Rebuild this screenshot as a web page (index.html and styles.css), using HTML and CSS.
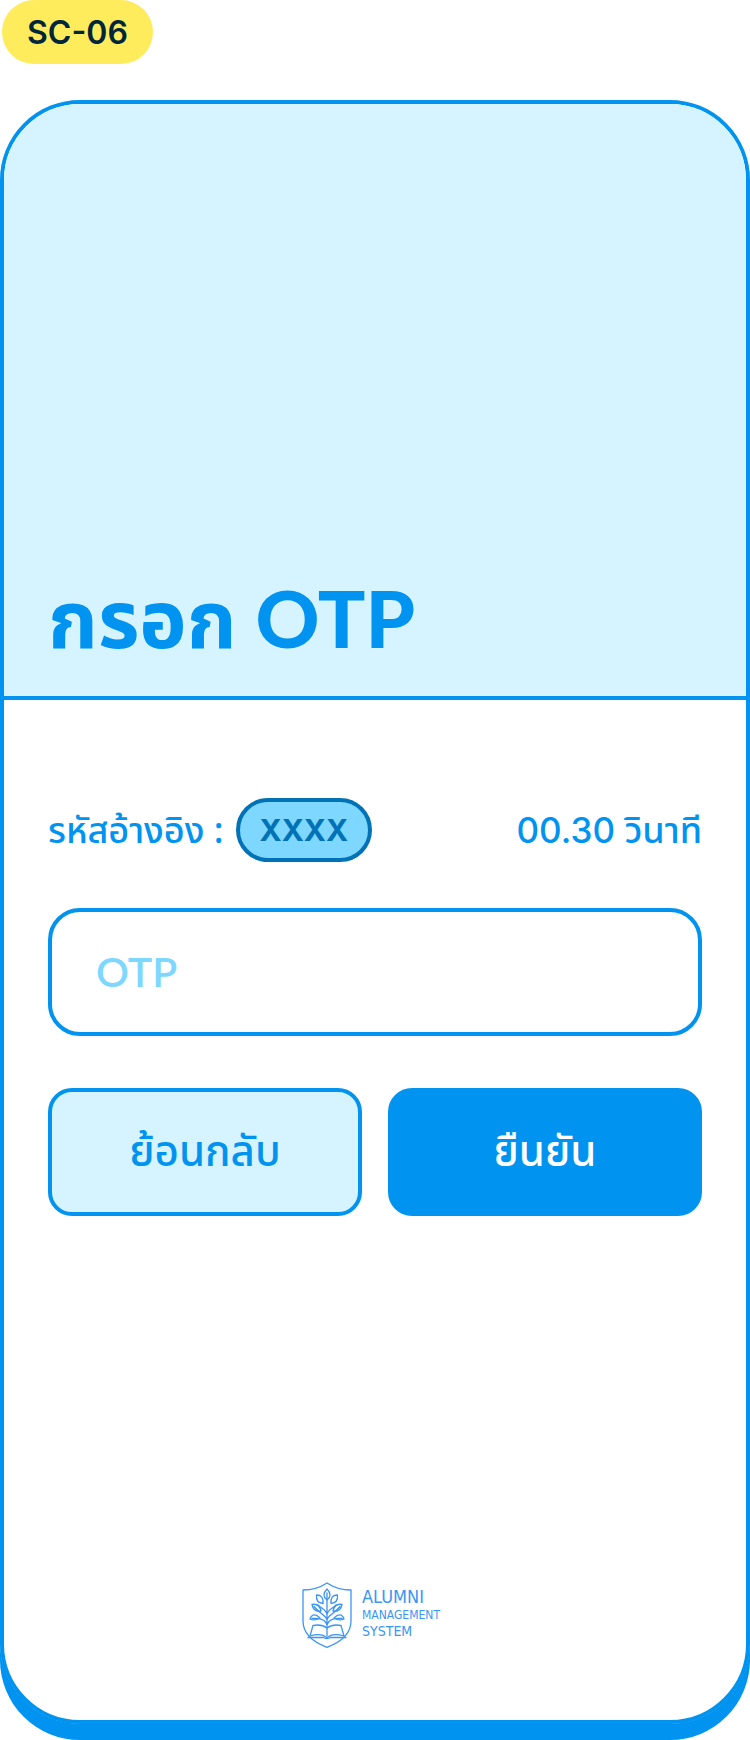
FILE: index.html
```html
<!DOCTYPE html>
<html lang="th">
<head>
<meta charset="utf-8">
<meta name="viewport" content="width=device-width, initial-scale=1">
<title>กรอก OTP</title>
<link rel="stylesheet" href="styles.css">
</head>
<body>
<div class="page">
  <span class="screen-tag">SC-06</span>
  <main class="phone">
    <header class="hero">
      <h1 class="title">กรอก<span class="title-latin"> OTP</span></h1>
    </header>
    <form class="form">
      <div class="info">
        <div class="reference">
          <span>รหัสอ้างอิง :</span>
          <span class="code">XXXX</span>
        </div>
        <span class="timer"><span class="digits">00.30</span> วินาที</span>
      </div>
      <input class="otp" type="text" inputmode="numeric" placeholder="OTP" aria-label="OTP">
      <div class="actions">
        <button class="button button-back" type="button">ย้อนกลับ</button>
        <button class="button button-confirm" type="submit">ยืนยัน</button>
      </div>
    </form>
    <footer class="brand">
      <svg class="shield" viewBox="0 0 50 66" fill="none" stroke="currentColor" stroke-width="1.3" stroke-linejoin="round" stroke-linecap="round" aria-hidden="true">
        <path d="M25 1C19 5 9 8 1 8V39C1 52 11 60 25 65.300C39 60 49 52 49 39V8C41 8 31 5 25 1Z"/>
        <path d="M25 54V11M25 33C25 28 20 27 16 23M25 33C25 28 30 27 34 23M25 38C24 33 18 32 12 24.500M25 38C26 33 32 32 38 24.500M25 43C23 37 18 36 10 36.500M25 43C27 37 32 36 40 36.500"/>
        <path d="M25 7C21 11 21 15 25 18C29 15 29 11 25 7Z"/>
        <path d="M14.500 13C19.500 13 21.500 16 21 21.500C16 21 14 18 14.500 13ZM35.500 13C30.500 13 28.500 16 29 21.500C34 21 36 18 35.500 13Z"/>
        <path d="M10 22.500C15 21.500 18 24.500 19 29C14 30 11 27 10 22.500ZM40 22.500C35 21.500 32 24.500 31 29C36 30 39 27 40 22.500Z"/>
        <path d="M8 37C10 31.500 14 32 18 36C14 38.500 11 38.500 8 37ZM42 37C40 31.500 36 32 32 36C36 38.500 39 38.500 42 37Z"/>
        <path d="M25 56C21 52 15 52 8 54L11 43.500C16 42.500 21 43 25 46C29 43 34 42.500 39 43.500L42 54C35 52 29 52 25 56"/>
        <path d="M6 55.500H22C23 57 27 57 28 55.500H44"/>
      </svg>
      <div class="brand-name">
        <span class="brand-first">ALUMNI</span>
        <span class="brand-second">MANAGEMENT</span>
        <span class="brand-third">SYSTEM</span>
      </div>
    </footer>
  </main>
</div>
</body>
</html>
```
FILE: styles.css
```css
* {
  box-sizing: border-box;
}

body {
  margin: 0;
  background: #fff;
  color: #0093ef;
  font-family: "Noto Sans", "Noto Sans Thai", "Noto Sans Thai Looped", sans-serif;
  font-weight: 500;
}

.page {
  display: flex;
  flex-direction: column;
  min-height: 100vh;
  padding-bottom: 16px;
}

.screen-tag {
  align-self: flex-start;
  margin: 0 2px 36px;
  padding: 1px 25px 0;
  border-radius: 32px;
  background: #ffec5c;
  color: #00263c;
  font: 600 32px/63px Inter, sans-serif;
}

.phone {
  flex: 1;
  display: flex;
  flex-direction: column;
  border: 4px solid #0093ef;
  border-radius: 80px;
  box-shadow: 0 2px 0 #0093ef, 0 8px 0 #0093ef, 0 16px 0 #0093ef;
}

.hero {
  display: flex;
  align-items: flex-end;
  min-height: 596px;
  padding: 0 44px 18px;
  border-bottom: 4px solid #0093ef;
  border-radius: 76px 76px 0 0;
  background: #d6f4ff;
}

.title {
  margin: 0;
  font-size: 80px;
  font-weight: 700;
  line-height: 120px;
}

.title-latin {
  font-family: Lato, sans-serif;
  font-size: 79px;
  font-weight: 900;
}

.form {
  padding: 98px 44px 0;
}

.info {
  display: flex;
  align-items: center;
  justify-content: space-between;
  margin-bottom: 46px;
  font-size: 36px;
  line-height: 64px;
}

.reference {
  display: flex;
  align-items: center;
  gap: 12px;
}

.code {
  padding: 1px 20px 0;
  border: 4px solid #0072b5;
  border-radius: 32px;
  background: #7dd7ff;
  color: #0072b5;
  font: 700 30px/55px Inter, sans-serif;
}

.digits {
  font-family: Inter, sans-serif;
  font-size: 35px;
}

.otp {
  display: block;
  width: 100%;
  height: 128px;
  margin-bottom: 52px;
  padding: 0 44px 2px;
  border: 4px solid #0093ef;
  border-radius: 32px;
  background: #fff;
  color: #0093ef;
  font: 600 41px/56px Lato, sans-serif;
}

.otp::placeholder {
  color: #7dd7ff;
  opacity: 1;
}

.actions {
  display: grid;
  grid-template-columns: 1fr 1fr;
  gap: 26px;
}

.button {
  height: 128px;
  padding: 2px 0 0;
  border: 4px solid #0093ef;
  border-radius: 24px;
  font-family: inherit;
  font-size: 42px;
  font-weight: 500;
}

.button-back {
  background: #d6f4ff;
  color: #0093ef;
}

.button-confirm {
  background: #0093ef;
  color: #fff;
}

.brand {
  display: flex;
  justify-content: center;
  gap: 10px;
  margin-top: auto;
  padding: 0 8px 72px 0;
  color: #3b95f5;
}

.shield {
  width: 50px;
  height: 66px;
}

.brand-name {
  display: flex;
  flex-direction: column;
  padding-top: 5px;
  font-family: "DejaVu Sans Condensed", "Noto Sans", sans-serif;
}

.brand-first {
  font-size: 18px;
  line-height: 20px;
}

.brand-second {
  font-size: 12px;
  line-height: 16px;
}

.brand-third {
  font-size: 14px;
  line-height: 16px;
}
```
